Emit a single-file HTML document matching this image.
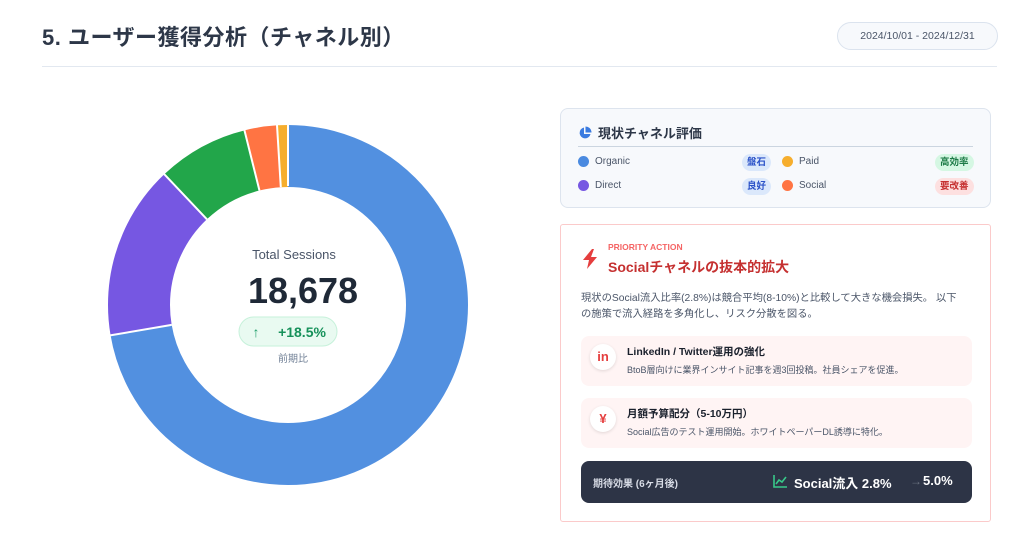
<!DOCTYPE html>
<html><head><meta charset="utf-8"><style>
*{box-sizing:border-box;margin:0;padding:0}
body{width:1034px;height:542px;background:#fff;font-family:"Liberation Sans","Noto Sans CJK JP",sans-serif;position:relative;overflow:hidden;color:#2d3748}
.h1{position:absolute;left:42px;top:20px;font-size:22px;font-weight:700;color:#2d3748;letter-spacing:0.5px}
.hr{position:absolute;left:42px;top:66px;width:955px;height:1px;background:#e2e8f0}
.date{position:absolute;left:837px;top:22px;width:161px;height:28px;border:1px solid #dbe3ee;border-radius:14px;background:#f7f9fc;font-size:10.5px;color:#4a5568;text-align:center;line-height:26px}
.card1{position:absolute;left:560px;top:108px;width:431px;height:100px;border:1px solid #dde4ee;border-radius:8px;background:#f7f9fc}
.c1t{position:absolute;left:17px;top:14px;font-size:13px;font-weight:700;color:#2d3748;display:flex;align-items:center;gap:6px}
.c1l{position:absolute;left:17px;right:17px;top:37px;height:1px;background:#cbd5e0}
.row{position:absolute;font-size:10px;color:#4a5568;display:flex;align-items:center}
.dot{width:11px;height:11px;border-radius:50%;margin-right:6px;display:inline-block}
.tag{position:absolute;font-size:9.5px;font-weight:700;padding:0 5px;height:17px;line-height:17px;border-radius:9px}
.card2{position:absolute;left:560px;top:224px;width:431px;height:298px;border:1px solid #fbcaca;border-radius:3px;background:#fff}
.pa{position:absolute;left:47px;top:17px;font-size:8.5px;font-weight:700;color:#f56565}
.pt{position:absolute;left:47px;top:32px;font-size:14px;font-weight:700;color:#c53030}
.desc{position:absolute;left:20px;top:66px;width:382px;font-size:10.3px;line-height:16px;color:#4a5568}
.item{position:absolute;left:20px;width:391px;height:50px;background:#fff4f4;border-radius:8px}
.ic{position:absolute;left:9px;top:8px;width:26px;height:26px;border-radius:50%;background:#fff;box-shadow:0 1px 3px rgba(0,0,0,.12);color:#e53e3e;font-weight:700;text-align:center;line-height:26px;font-size:13px}
.it{position:absolute;left:46px;top:8px;font-size:10.5px;font-weight:700;color:#1a202c}
.is{position:absolute;left:46px;top:27px;font-size:9px;color:#4a5568}
.bar{position:absolute;left:20px;top:236px;width:391px;height:42px;background:#2d3446;border-radius:8px;color:#fff}
</style></head><body>
<div class="h1">5. ユーザー獲得分析（チャネル別）</div>
<div class="hr"></div>
<div class="date">2024/10/01 - 2024/12/31</div>

<svg style="position:absolute;left:0;top:0" width="560" height="542">
<g transform="rotate(-90 288 305)" fill="none" stroke-width="62">
<circle cx="288" cy="305" r="149" stroke="#5290e0" stroke-dasharray="677 1000" stroke-dashoffset="0"/>
<circle cx="288" cy="305" r="149" stroke="#7657e2" stroke-dasharray="0 677 146.4 1000"/>
<circle cx="288" cy="305" r="149" stroke="#22a64a" stroke-dasharray="0 823.4 76.5 1000"/>
<circle cx="288" cy="305" r="149" stroke="#ff7443" stroke-dasharray="0 899.9 27.3 1000"/>
<circle cx="288" cy="305" r="149" stroke="#f6ae2d" stroke-dasharray="0 927.2 9.2 1000"/>
</g>
<g stroke="#fff" stroke-width="2">
<line x1="288" y1="186" x2="288" y2="123"/>
<line x1="288" y1="305" x2="288" y2="123" transform="rotate(260.3 288 305)" stroke-dasharray="0 118 70"/>
<line x1="288" y1="305" x2="288" y2="123" transform="rotate(316.6 288 305)" stroke-dasharray="0 118 70"/>
<line x1="288" y1="305" x2="288" y2="123" transform="rotate(346 288 305)" stroke-dasharray="0 118 70"/>
<line x1="288" y1="305" x2="288" y2="123" transform="rotate(356.5 288 305)" stroke-dasharray="0 118 70"/>
</g>
<text x="294" y="259" font-size="13" fill="#4a5568" text-anchor="middle" font-family="Liberation Sans,sans-serif">Total Sessions</text>
<text x="303" y="303" font-size="36" font-weight="700" fill="#1f2937" text-anchor="middle" font-family="Liberation Sans,sans-serif">18,678</text>
<rect x="239" y="317" width="98" height="29" rx="14.5" fill="#e9faf1" stroke="#c6f1da"/>
<text x="256" y="337" font-size="14" font-weight="700" fill="#22a06b" text-anchor="middle">↑</text>
<text x="302" y="337" font-size="14" font-weight="700" fill="#16915a" text-anchor="middle" font-family="Liberation Sans,sans-serif">+18.5%</text>
<text x="293" y="362" font-size="10" fill="#718096" text-anchor="middle" font-family="Liberation Sans,Noto Sans CJK JP,sans-serif">前期比</text>
</svg>

<div class="card1">
<div class="c1t"><svg width="14" height="14" viewBox="0 0 14 14"><path d="M6 1.5A5.5 5.5 0 1 0 12.5 8H6Z" fill="#3b7be0"/><path d="M7.5 0.5V6.5H13.5A6 6 0 0 0 7.5 0.5Z" fill="#3b7be0"/></svg>現状チャネル評価</div>
<div class="c1l"></div>
<div class="row" style="left:17px;top:47px"><span class="dot" style="background:#4a8ae0"></span>Organic</div>
<div class="tag" style="left:181px;top:45px;background:#dbe8fb;color:#2b52c8">盤石</div>
<div class="row" style="left:221px;top:47px"><span class="dot" style="background:#f6ae2d"></span>Paid</div>
<div class="tag" style="left:374px;top:45px;background:#d5f7e3;color:#1b7a45">高効率</div>
<div class="row" style="left:17px;top:71px"><span class="dot" style="background:#7657e2"></span>Direct</div>
<div class="tag" style="left:181px;top:69px;background:#dbe8fb;color:#2b52c8">良好</div>
<div class="row" style="left:221px;top:71px"><span class="dot" style="background:#ff7443"></span>Social</div>
<div class="tag" style="left:374px;top:69px;background:#fde0e0;color:#c53030">要改善</div>
</div>

<div class="card2">
<svg style="position:absolute;left:21px;top:24px" width="16" height="20" viewBox="0 0 16 20"><path d="M10 0L1 11H7L5 20L15 8H9L12 0Z" fill="#e53e3e"/></svg>
<div class="pa">PRIORITY ACTION</div>
<div class="pt">Socialチャネルの抜本的拡大</div>
<div class="desc">現状のSocial流入比率(2.8%)は競合平均(8-10%)と比較して大きな機会損失。 以下の施策で流入経路を多角化し、リスク分散を図る。</div>
<div class="item" style="top:111px"><div class="ic">in</div><div class="it">LinkedIn / Twitter運用の強化</div><div class="is">BtoB層向けに業界インサイト記事を週3回投稿。社員シェアを促進。</div></div>
<div class="item" style="top:173px"><div class="ic">¥</div><div class="it">月額予算配分（5-10万円）</div><div class="is">Social広告のテスト運用開始。ホワイトペーパーDL誘導に特化。</div></div>
<div class="bar">
<div style="position:absolute;left:12px;top:14px;font-size:10px;font-weight:700;color:#d8dce6">期待効果 (6ヶ月後)</div>
<svg style="position:absolute;left:192px;top:13px" width="15" height="14" viewBox="0 0 15 14"><path d="M1 1V13H14" stroke="#38c98a" stroke-width="1.6" fill="none"/><path d="M3 10L6 6L9 8L13 3" stroke="#38c98a" stroke-width="1.6" fill="none"/></svg>
<div style="position:absolute;left:213px;top:12px;font-size:13px;font-weight:700">Social流入 2.8%</div>
<div style="position:absolute;left:329px;top:13px;font-size:12px;color:#6b7280">→</div>
<div style="position:absolute;left:342px;top:12px;font-size:13px;font-weight:700">5.0%</div>
</div>
</div>
</body></html>
